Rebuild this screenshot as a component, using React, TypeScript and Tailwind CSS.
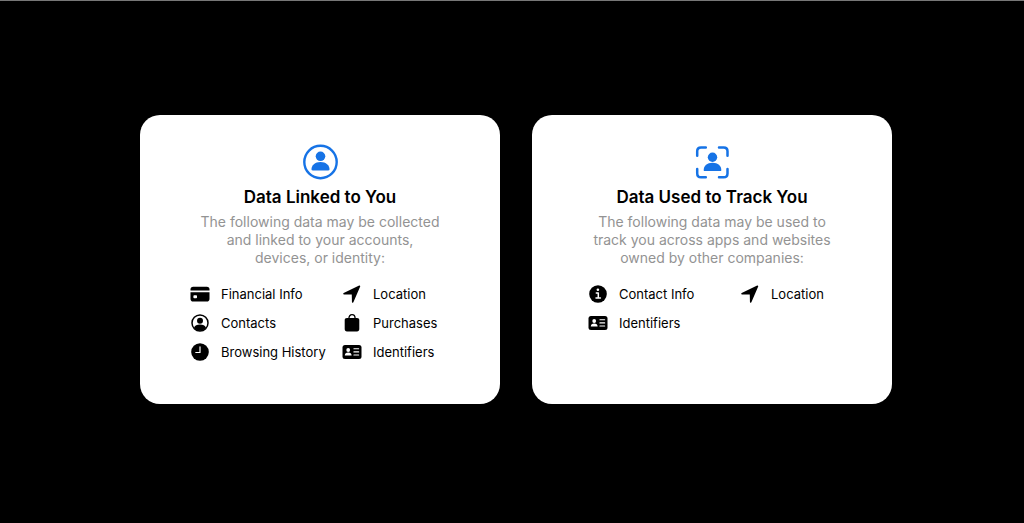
import React from "react";

const LinkedIcon = () => (
  <svg width={36} height={36} viewBox="0 0 36 36" aria-hidden="true">
    <circle
      cx="18.5"
      cy="18"
      r="16.2"
      fill="none"
      stroke="currentColor"
      strokeWidth="2.4"
    />
    <circle cx="18.5" cy="12.3" r="4.8" fill="currentColor" />
    <path
      d="M9.5 25.2c0-4 3.400-7.300 9-7.300s9 3.300 9 7.300c0 .8-.4 1.200-1.200 1.200H10.700c-.8 0-1.200-.4-1.200-1.200z"
      fill="currentColor"
    />
  </svg>
);

const TrackIcon = () => (
  <svg width={36} height={36} viewBox="0 0 36 36" aria-hidden="true">
    <path
      d="M3.2 11.800V7.200c0-2.400 1.400-3.800 3.800-3.800h4.800M25 3.400h4.700c2.400 0 3.800 1.400 3.800 3.800v4.600M33.500 25v4.400c0 2.400-1.400 3.800-3.800 3.800H25M11.800 33.200H7c-2.400 0-3.800-1.400-3.800-3.800V25"
      fill="none"
      stroke="currentColor"
      strokeWidth="2.500"
      strokeLinecap="round"
    />
    <circle cx="18.500" cy="13.300" r="4.700" fill="currentColor" />
    <path
      d="M9.700 25.900c0-3.900 3.300-7.100 8.800-7.100s8.800 3.200 8.800 7.100c0 .8-.4 1.200-1.200 1.200H10.900c-.8 0-1.200-.4-1.200-1.200z"
      fill="currentColor"
    />
  </svg>
);

const CardIcon = () => (
  <svg width={20} height={20} viewBox="0 0 20 20" aria-hidden="true">
    <path d="M.5 5.6c0-2 .9-2.9 2.7-2.9h13.6c1.8 0 2.7.9 2.7 2.9v.8H.5z" />
    <path
      fillRule="evenodd"
      d="M.5 8.2h19v6.5c0 1.9-.9 2.8-2.7 2.8H3.2c-1.8 0-2.7-.9-2.7-2.8zM4.2 11.3c-.5 0-.8.3-.8.8v1.3c0 .5.3.8.8.8h2c.5 0 .8-.3.8-.8v-1.3c0-.5-.3-.8-.8-.8z"
    />
  </svg>
);

const ContactIcon = () => (
  <svg width={20} height={20} viewBox="0 0 20 20" aria-hidden="true">
    <circle
      cx="10"
      cy="10"
      r="8"
      fill="none"
      stroke="currentColor"
      strokeWidth="1.5"
    />
    <circle cx="10" cy="7.7" r="3" />
    <path d="M4 14.8c.8-2.1 3-3.2 6-3.2s5.2 1.1 6 3.2c-1.5 1.9-3.6 3-6 3s-4.5-1.1-6-3z" />
  </svg>
);

const ClockIcon = () => (
  <svg width={20} height={20} viewBox="0 0 20 20" aria-hidden="true">
    <circle cx="10" cy="10" r="8.8" />
    <path
      d="M10 4.8v5.7H5.8"
      fill="none"
      stroke="#fff"
      strokeWidth="1.2"
      strokeLinecap="round"
      strokeLinejoin="round"
    />
  </svg>
);

const LocationIcon = () => (
  <svg width={20} height={20} viewBox="0 0 20 20" aria-hidden="true">
    <path
      d="M2 9.700 17.500 2.300 10.700 18 10.500 9.800z"
      fill="currentColor"
      stroke="currentColor"
      strokeWidth="1.500"
      strokeLinejoin="round"
    />
  </svg>
);

const BagIcon = () => (
  <svg width={20} height={20} viewBox="0 0 20 20" aria-hidden="true">
    <path
      d="M6.9 5.5C6.9 3.300 8.100 1.700 10 1.700s3.100 1.600 3.100 3.800"
      fill="none"
      stroke="currentColor"
      strokeWidth="1.3"
    />
    <path d="M5 4.900h10c1.500 0 2.300.8 2.300 2.300v8.900c0 1.500-.8 2.300-2.300 2.300H5c-1.500 0-2.300-.8-2.300-2.300V7.200c0-1.500.8-2.300 2.300-2.300z" />
  </svg>
);

const IdIcon = () => (
  <svg width={20} height={20} viewBox="0 0 20 20" aria-hidden="true">
    <rect x="0.5" y="3" width="19" height="14" rx="2.5" />
    <g fill="#fff">
      <circle cx="6.2" cy="8" r="1.9" />
      <path d="M2.8 13.4c0-1.900 1.300-3 3.400-3s3.400 1.100 3.400 3z" />
      <rect x="11.4" y="6.2" width="5.8" height="1.1" rx=".5" />
      <rect x="11.4" y="9.3" width="5.8" height="1.1" rx=".5" />
      <rect x="11.4" y="12.4" width="5.8" height="1.1" rx=".5" />
    </g>
  </svg>
);

const InfoIcon = () => (
  <svg width={20} height={20} viewBox="0 0 20 20" aria-hidden="true">
    <circle cx="10" cy="10" r="8.8" />
    <circle cx="9.9" cy="5.8" r="1.3" fill="#fff" />
    <path
      d="M8.3 8.9h2v5M8 14.100h4.400"
      fill="none"
      stroke="#fff"
      strokeWidth="1.5"
      strokeLinecap="round"
      strokeLinejoin="round"
    />
  </svg>
);

interface Item {
  label: string;
  icon: React.FC;
}

interface PrivacyCardProps {
  icon: React.FC;
  title: string;
  lines: string[];
  items: Item[];
  listClass: string;
}

const linkedItems: Item[] = [
  { label: "Financial Info", icon: CardIcon },
  { label: "Location", icon: LocationIcon },
  { label: "Contacts", icon: ContactIcon },
  { label: "Purchases", icon: BagIcon },
  { label: "Browsing History", icon: ClockIcon },
  { label: "Identifiers", icon: IdIcon },
];

const trackItems: Item[] = [
  { label: "Contact Info", icon: InfoIcon },
  { label: "Location", icon: LocationIcon },
  { label: "Identifiers", icon: IdIcon },
];

const PrivacyCard: React.FC<PrivacyCardProps> = ({
  icon: Icon,
  title,
  lines,
  items,
  listClass,
}) => (
  <section className="flex-1 max-w-[360px] rounded-[20px] bg-white pt-[29px] pb-[42px] text-black">
    <div className="flex justify-center text-[#1673e6]">
      <Icon />
    </div>
    <h2 className="mt-1 text-center text-[17px] leading-[26px] font-semibold">
      {title}
    </h2>
    <p className="mt-[3px] text-center text-sm leading-[18px] text-[#939393]">
      {lines.map((line) => (
        <span key={line} className="block">
          {line}
        </span>
      ))}
    </p>
    <ul
      className={`mt-[17px] grid grid-cols-[152px_auto] justify-start gap-y-[9px] ${listClass}`}
    >
      {items.map(({ label, icon: ItemIcon }) => (
        <li key={label} className="flex items-center gap-[11px]">
          <ItemIcon />
          <span className="text-[13px] leading-5 whitespace-nowrap">
            {label}
          </span>
        </li>
      ))}
    </ul>
  </section>
);

const App: React.FC = () => {
  return (
    <main className="flex min-h-screen items-center justify-center border-t border-[#777] bg-black pb-[5px] pl-2 font-['Inter',sans-serif]">
      <div className="flex flex-1 justify-center gap-8">
        <PrivacyCard
          icon={LinkedIcon}
          title="Data Linked to You"
          lines={[
            "The following data may be collected",
            "and linked to your accounts,",
            "devices, or identity:",
          ]}
          items={linkedItems}
          listClass="pl-[50px]"
        />
        <PrivacyCard
          icon={TrackIcon}
          title="Data Used to Track You"
          lines={[
            "The following data may be used to",
            "track you across apps and websites",
            "owned by other companies:",
          ]}
          items={trackItems}
          listClass="pl-14"
        />
      </div>
    </main>
  );
};

export default App;
